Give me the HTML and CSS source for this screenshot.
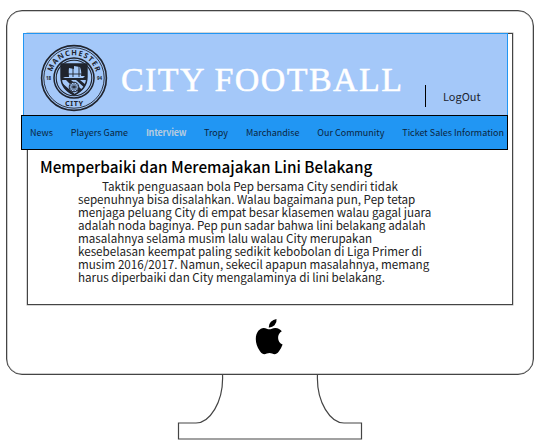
FILE: index.html
```html
<!DOCTYPE html>
<html lang="id">
<head>
<meta charset="utf-8">
<title>City Football</title>
<link rel="stylesheet" href="styles.css">
</head>
<body>
<div class="monitor">
  <div class="screen">
    <header class="header">
      <svg class="crest" width="68" height="68" viewBox="0 0 68 68">
        <defs>
          <path id="top-arc" d="M11.2 34a22.8 22.8 0 0 1 45.6 0"/>
          <clipPath id="shield"><path d="M21 20h26v13q0 12-13 18q-13-6-13-18z"/></clipPath>
        </defs>
        <g fill="none" stroke="#20242e">
          <circle cx="34" cy="34" r="32.4" stroke-width="1.6"/>
          <circle cx="34" cy="34" r="30.2" stroke-width=".9"/>
          <circle cx="34" cy="34" r="20" stroke-width="1.5"/>
          <circle cx="34" cy="34" r="17.8" stroke-width="1.1"/>
        </g>
        <text class="crest-name"><textPath href="#top-arc" startOffset="50%" text-anchor="middle" textLength="59">MANCHESTER</textPath></text>
        <text class="crest-name" x="34" y="61.500" text-anchor="middle" textLength="18">CITY</text>
        <text class="crest-year" x="8.5" y="36" text-anchor="middle">18</text>
        <text class="crest-year" x="59.5" y="36" text-anchor="middle">94</text>
        <g clip-path="url(#shield)">
          <path fill="#20242e" d="M20 19h28v33H20z"/>
          <path fill="#a4c8f9" d="M23 33h6q-1-6 0-9l5 1v-3l6 1q2 5 1 9h4l-2 2H25zM22 36l4 0l16 16h-5L22 39zM31 36h5l11 10v4zM40 36h6v5z"/>
          <path stroke="#20242e" stroke-width=".9" fill="none" d="M28 23v10M33 22v11M39 22v11M25 30h18"/>
          <circle cx="34" cy="43" r="4.8" fill="#a4c8f9" stroke="#20242e"/>
          <path d="M34 38v10M29.5 41.5l9 3M38.500 41.500l-9 3M31 47l6-8M37 47l-6-8" stroke="#20242e" stroke-width=".7"/>
        </g>
        <path fill="none" stroke="#20242e" stroke-width="1.4" d="M21 20h26v13q0 12-13 18q-13-6-13-18z"/>
      </svg>
      <h1 class="title">CITY FOOTBALL</h1>
      <a class="logout">LogOut</a>
    </header>
    <nav class="nav">
      <a>News</a><a>Players Game</a><a class="active">Interview</a><a>Tropy</a><a>Marchandise</a><a>Our Community</a><a>Ticket Sales Information</a>
    </nav>
    <main class="article">
      <h2>Memperbaiki dan Meremajakan Lini Belakang</h2>
      <p>Taktik penguasaan bola Pep bersama City sendiri tidak<br>sepenuhnya bisa disalahkan. Walau bagaimana pun, Pep tetap<br>menjaga peluang City di empat besar klasemen walau gagal juara<br>adalah noda baginya. Pep pun sadar bahwa lini belakang adalah<br>masalahnya selama musim lalu walau City merupakan<br>kesebelasan keempat paling sedikit kebobolan di Liga Primer di<br>musim 2016/2017. Namun, sekecil apapun masalahnya, memang<br>harus diperbaiki dan City mengalaminya di lini belakang.</p>
    </main>
  </div>
  <svg class="apple" width="28" height="36" viewBox="0 0 28 36">
    <path d="M21.500 0q.6 3.600-2 6.300q-2.500 2.500-5.800 2.100q-.1-3.200 2.200-5.600Q18.300.4 21.500 0zM14.200 10.300c1.800 0 3.500-1.500 6.300-1.400q4 .2 6.300 3.400q-3.900 2.500-3.700 6.800q.2 4.600 4.500 6.500q-1.300 3.700-3.600 6.700c-2.700 3.600-4.600 3.300-6.900 2.300q-2.600-1.100-5.300 0c-2.500 1.100-4.200 1.200-6.800-2.300Q.8 26.700.8 20.100C.8 12.700 5 9 8.700 8.900c2.200 0 4.100 1.400 5.500 1.400z"/>
  </svg>
</div>
<svg class="stand" width="186" height="66" viewBox="0 0 186 66">
  <path d="M45.500 0C47 29 32 49 19 49H1.500v16h183V49H167C154 49 139 29 140.500 0" fill="none" stroke="#444" stroke-width="1.2"/>
</svg>
</body>
</html>
```
FILE: styles.css
```css
* { box-sizing: border-box; }
body {
  margin: 0;
  padding: 10px 0 0 6px;
  background: #fff;
  font-family: "Noto Sans CJK SC", "Noto Sans", sans-serif;
  overflow: hidden;
}
.monitor {
  width: 528px;
  height: 365px;
  padding: 22px 0 0 20px;
  border: 1px solid #444;
  border-radius: 16px;
  box-shadow: inset 0 0 0 .5px #999;
}
.screen {
  width: 486px;
  height: 272px;
  border: 1px solid #444;
  box-shadow: 0 0 0 .5px #aaa;
}
.header {
  display: flex;
  width: 485px;
  height: 82px;
  margin: -1px 0 0 -5px;
  padding: 10px 0 0 16px;
  background: #a4c8f9;
  border: 1px solid #2196f3;
  border-bottom: 0;
}
.crest { flex: none; }
.crest-name { font: bold 7.3px "Noto Sans", sans-serif; fill: #20242e; }
.crest-year { font: bold 4.5px "Noto Sans", sans-serif; fill: #20242e; }
.title {
  flex: none;
  width: 304px;
  margin: 14px 0 0 13px;
  font: 400 34px/44px "Liberation Serif", serif;
  letter-spacing: 1.4px;
  -webkit-text-stroke: .5px #fff;
  color: #fff;
  white-space: nowrap;
}
.logout {
  height: 22px;
  margin-top: 41px;
  padding-left: 17px;
  border-left: 1px solid #000;
  font-size: 11px;
  line-height: 22px;
  color: #1c2430;
}
.nav {
  display: flex;
  justify-content: space-between;
  align-items: center;
  width: 487px;
  height: 35px;
  margin-left: -7px;
  padding: 0 3px 1px 8px;
  background: #2196f3;
  border: 1px solid #000;
  font-size: 9px;
  color: #0b2540;
  white-space: nowrap;
}
.nav .active { font-weight: 700; letter-spacing: -.25px; color: #b4cbe0; }
.article { padding: 6px 0 0 12px; white-space: nowrap; }
h2 {
  margin: 0;
  font-size: 15.3px;
  line-height: 20px;
  font-weight: 500;
  color: #000;
}
p {
  margin: 3px 0 0 38px;
  font-size: 11.65px;
  line-height: 13px;
  text-indent: 24px;
  color: #222;
}
.apple { display: block; margin: 14px 0 0 228px; }
.stand { display: block; margin: -1px 0 0 171px; }
```
